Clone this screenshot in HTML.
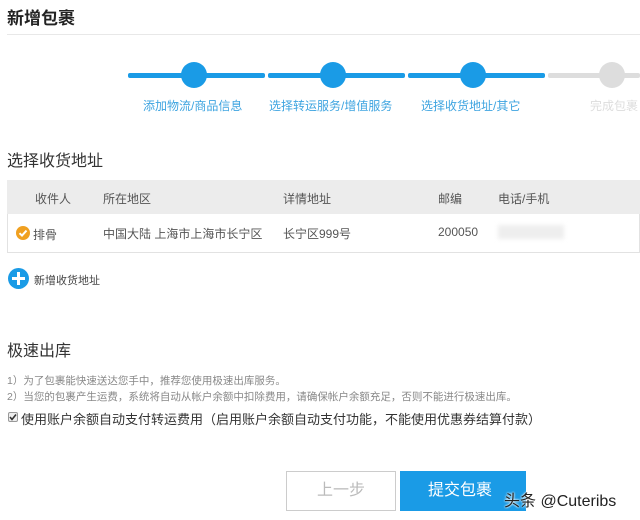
<!DOCTYPE html>
<html><head><meta charset="utf-8"><style>
*{margin:0;padding:0;box-sizing:border-box}
body{width:640px;height:520px;background:#fff;font-family:"Liberation Sans","Noto Sans CJK SC",sans-serif;color:#333;position:relative;overflow:hidden}
.a{position:absolute;white-space:nowrap}
.bar{position:absolute;top:73px;height:5px;background:#1a9be6;border-radius:2px}
.dot{position:absolute;top:62px;width:26px;height:26px;border-radius:50%;background:#1a9be6}
.lbl{position:absolute;top:97px;font-size:12px;color:#3ea4e0}
</style></head><body>
<div class="a" style="left:7px;top:4px;font-size:17px;font-weight:bold;color:#222">新增包裹</div>
<div class="a" style="left:7px;top:34px;width:633px;height:1px;background:#e8e8e8"></div>

<div class="bar" style="left:128px;width:137px"></div>
<div class="bar" style="left:268px;width:137px"></div>
<div class="bar" style="left:408px;width:137px"></div>
<div class="bar" style="left:548px;width:92px;background:#ddd"></div>
<div class="dot" style="left:181px"></div>
<div class="dot" style="left:320px"></div>
<div class="dot" style="left:460px"></div>
<div class="dot" style="left:599px;background:#ddd"></div>
<div class="lbl" style="left:143px">添加物流/商品信息</div>
<div class="lbl" style="left:269px">选择转运服务/增值服务</div>
<div class="lbl" style="left:421px">选择收货地址/其它</div>
<div class="lbl" style="left:590px;color:#ddd">完成包裹</div>

<div class="a" style="left:7px;top:147px;font-size:16px;color:#333">选择收货地址</div>
<div class="a" style="left:7px;top:180px;width:633px;height:73px;border:1px solid #e2e2e2"></div>
<div class="a" style="left:7px;top:180px;width:633px;height:34px;background:#ececec"></div>
<div class="a" style="left:35px;top:190px;font-size:12px;color:#555">收件人</div>
<div class="a" style="left:103px;top:190px;font-size:12px;color:#555">所在地区</div>
<div class="a" style="left:283px;top:190px;font-size:12px;color:#555">详情地址</div>
<div class="a" style="left:438px;top:190px;font-size:12px;color:#555">邮编</div>
<div class="a" style="left:498px;top:190px;font-size:12px;color:#555">电话/手机</div>
<svg class="a" style="left:16px;top:226px" width="14" height="14"><circle cx="7" cy="7" r="7" fill="#f0a020"/><path d="M3.5 7.2 L6 9.6 L10.5 4.6" stroke="#fff" stroke-width="2" fill="none"/></svg>
<div class="a" style="left:33px;top:226px;font-size:12px;color:#555">排骨</div>
<div class="a" style="left:103px;top:225px;font-size:12px;color:#555">中国大陆 上海市上海市长宁区</div>
<div class="a" style="left:283px;top:225px;font-size:12px;color:#555">长宁区999号</div>
<div class="a" style="left:438px;top:225px;font-size:12px;color:#555">200050</div>
<div class="a" style="left:498px;top:225px;width:66px;height:14px;background:#eee;filter:blur(2px)"></div>
<div class="a" style="left:8px;top:268px;width:21px;height:21px;border-radius:50%;background:#1a9be6"></div>
<div class="a" style="left:12px;top:277px;width:13px;height:3px;background:#fff"></div>
<div class="a" style="left:17px;top:272px;width:3px;height:13px;background:#fff"></div>
<div class="a" style="left:34px;top:272px;font-size:11px;color:#444">新增收货地址</div>

<div class="a" style="left:7px;top:337px;font-size:16px;color:#333">极速出库</div>
<div class="a" style="left:7px;top:373px;font-size:10.5px;color:#888">1）为了包裹能快速送达您手中，推荐您使用极速出库服务。</div>
<div class="a" style="left:7px;top:389px;font-size:10.5px;color:#888">2）当您的包裹产生运费，系统将自动从帐户余额中扣除费用，请确保帐户余额充足，否则不能进行极速出库。</div>
<svg class="a" style="left:8px;top:412px" width="10" height="10"><rect x="0.5" y="0.5" width="9" height="9" rx="1.5" fill="#eee" stroke="#999"/><path d="M2 5 L4 7.5 L8 2.5" stroke="#333" stroke-width="1.6" fill="none"/></svg>
<div class="a" style="left:21px;top:409px;font-size:13px;color:#333">使用账户余额自动支付转运费用（启用账户余额自动支付功能，不能使用优惠券结算付款）</div>

<div class="a" style="left:286px;top:471px;width:110px;height:40px;border:1px solid #ccc;font-size:16px;color:#bbb;text-align:center;line-height:38px">上一步</div>
<div class="a" style="left:400px;top:471px;width:126px;height:40px;background:#1a9be6;font-size:16px;color:#fff;text-align:left;padding-left:28px;line-height:40px">提交包裹</div>
<div class="a" style="left:504px;top:487px;font-size:16px;color:#222;text-shadow:0 0 2px #fff,0 0 2px #fff">头条 @Cuteribs</div>
</body></html>
